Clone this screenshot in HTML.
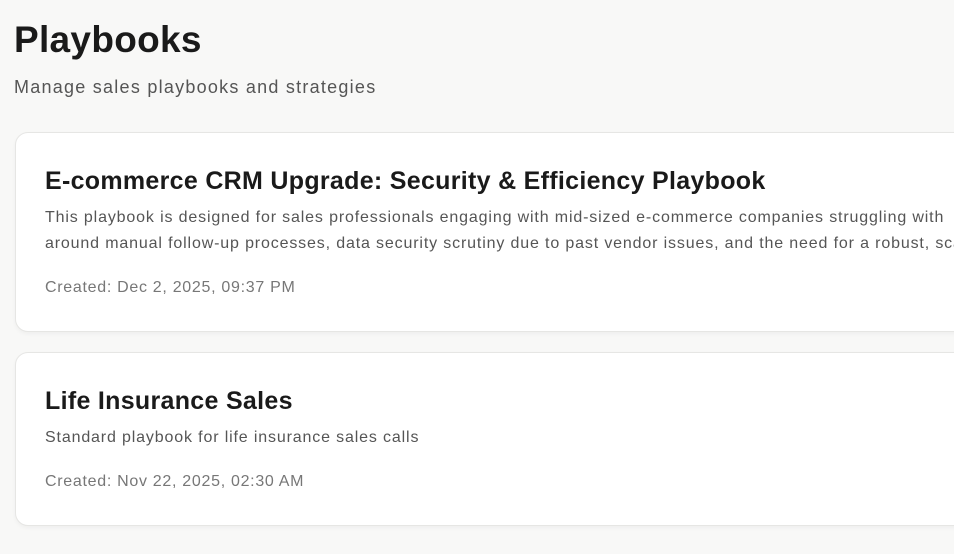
<!DOCTYPE html>
<html><head><meta charset="utf-8"><style>
html,body{margin:0;padding:0;background:#f8f8f7;width:954px;height:554px;overflow:hidden;font-family:"Liberation Sans",sans-serif;}
h1{position:absolute;left:14px;top:19px;margin:0;font-size:37px;font-weight:700;color:#1a1a1a;letter-spacing:0.3px;}
.sub{position:absolute;left:14px;top:77px;font-size:18px;color:#555;letter-spacing:1.25px;}
.card{position:absolute;left:15px;width:1000px;background:#fff;border:1px solid #e6e6e4;border-radius:13px;box-shadow:0 2px 4px rgba(0,0,0,0.04);}
.t{position:absolute;left:29px;font-size:25px;font-weight:700;color:#1a1a1a;white-space:nowrap;letter-spacing:0.3px;}
.d{position:absolute;left:29px;font-size:16px;line-height:26px;color:#555;white-space:nowrap;letter-spacing:0.85px;}
.c{position:absolute;left:29px;font-size:16px;color:#777;white-space:nowrap;letter-spacing:0.7px;}
</style></head><body>
<h1>Playbooks</h1>
<div class="sub">Manage sales playbooks and strategies</div>
<div class="card" style="top:132px;height:198px;">
<div class="t" style="top:34px;">E-commerce CRM Upgrade: Security &amp; Efficiency Playbook</div>
<div class="d" style="top:72px;">This playbook is designed for sales professionals engaging with mid-sized e-commerce companies struggling with<br>around manual follow-up processes, data security scrutiny due to past vendor issues, and the need for a robust, scalable</div>
<div class="c" style="top:146px;">Created: Dec 2, 2025, 09:37 PM</div>
</div>
<div class="card" style="top:352px;height:172px;">
<div class="t" style="top:34px;">Life Insurance Sales</div>
<div class="d" style="top:72px;">Standard playbook for life insurance sales calls</div>
<div class="c" style="top:120px;">Created: Nov 22, 2025, 02:30 AM</div>
</div>
</body></html>
